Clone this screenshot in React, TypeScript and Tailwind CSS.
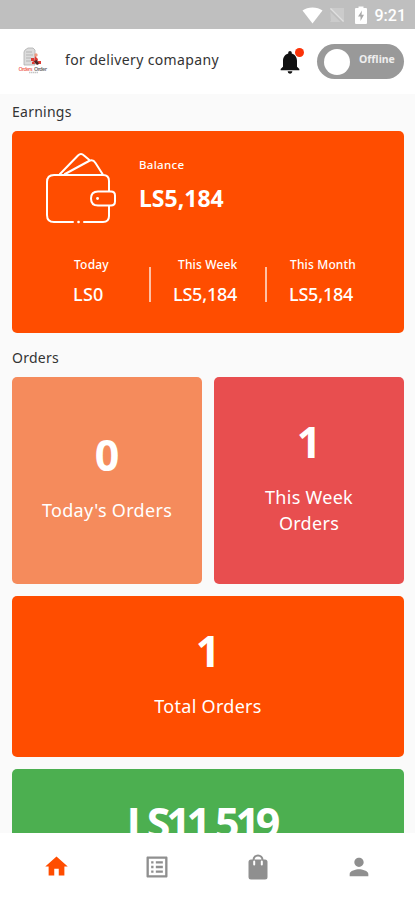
import { MdHome, MdListAlt, MdNotifications, MdPerson } from "react-icons/md";

const earnings = [
  { title: "Today", value: "LS0", titleClass: "left-[62px] tracking-[0.2px]", valueClass: "left-[61px] tracking-[0.3px]" },
  { title: "This Week", value: "LS5,184", titleClass: "left-[27px] tracking-[0.15px]", valueClass: "left-[22px] tracking-[-0.2px]" },
  { title: "This Month", value: "LS5,184", titleClass: "left-[23px] tracking-[0.15px]", valueClass: "left-[22px] tracking-[-0.2px]" },
];

function StatusBar() {
  return (
    <div className="flex h-[29px] shrink-0 items-center justify-end bg-[#bfbfbf] pr-[9px] text-white">
      <svg className="mt-[1px] h-[17px] w-[21px]" viewBox="0 0 21 17" fill="currentColor">
        <path d="M10.5 16.5 0.5 3.6C3.2 1.6 6.700.5 10.500.5s7.300 1.100 10 3.100z" />
      </svg>
      <svg className="mt-[1px] ml-[6px] h-[16px] w-[16px]" viewBox="0 0 16 16">
        <path d="M15 1v14H1z" fill="#d0d0d0" />
        <path d="M15 1v14H2L1 1z" fill="#cbcbcb" />
        <path d="M1 3l13 13" stroke="#bfbfbf" strokeWidth="2" />
        <path d="M1.500 1.500l13 13" stroke="#e0e0e0" strokeWidth="1.300" />
      </svg>
      <svg className="mt-[1px] ml-[10px] h-[18px] w-[12px]" viewBox="0 0 12 18">
        <path d="M3.500 2V.5h5V2H11q1 0 1 1v14q0 1-1 1H1q-1 0-1-1V3q0-1 1-1z" fill="#fff" />
        <path d="M7 4.500 3 10.500h2.500V15L9 8.800H6.500z" fill="#a9a9a9" />
      </svg>
      <span className="ml-[8px] mt-[3px] font-[Roboto] text-[16px] leading-none font-medium">9:21</span>
    </div>
  );
}

function Logo() {
  return (
    <svg className="h-[32px] w-[32px]" viewBox="0 0 32 32">
      <path d="M8 4l3-2h5l2 2v15H7V6z" fill="#dcdcdc" stroke="#adadad" strokeWidth=".8" />
      <path d="M9 6h6M9 9h7M9 12h5M9 15h5" stroke="#a5a5a5" strokeWidth=".7" />
      <circle cx="19" cy="9" r="1.700" fill="#ee9a80" />
      <path d="M14 12h3v3h-3zM18 10l3 3-1 3h-3zM21 15h3v3h-3zM15 16l2-1 1 3h-3z" fill="#dd3a33" />
      <path d="M17 15l3-1 2 4-2 1-2-2z" fill="#4b2525" />
      <text x="1.500" y="24.500" fontSize="5.300" fontWeight="600" fill="#f0685e" fontFamily="Noto Sans, sans-serif" textLength="14">Orders</text>
      <text x="17" y="24.500" fontSize="5.300" fontWeight="600" fill="#666" fontFamily="Noto Sans, sans-serif" textLength="13">Order</text>
      <path d="M12 26.500h9" stroke="#c5c5c5" strokeWidth="1.500" strokeDasharray="1.500 .5" />
    </svg>
  );
}

function Header() {
  return (
    <header className="flex h-[65px] shrink-0 items-center bg-white pl-[17px] pr-[11px]">
      <Logo />
      <h1 className="relative -top-[2px] ml-[16px] flex-1 whitespace-nowrap text-[14px] tracking-[0.36px] text-[#333]">
        for delivery comapany
      </h1>
      <div className="relative mr-[13px] h-[28px] w-[28px]">
        <MdNotifications className="h-[28px] w-[28px] text-[#111]" />
        <span className="absolute top-0 right-0 h-[9px] w-[9px] rounded-full bg-[#fb3208]" />
      </div>
      <button className="flex h-[35px] w-[87px] items-center rounded-full bg-[#999] pl-[7px] text-white">
        <span className="h-[26px] w-[26px] rounded-full bg-white" />
        <span className="relative -top-[2px] ml-[9px] text-[10.500px] font-bold text-[#eee]">Offline</span>
      </button>
    </header>
  );
}

function WalletIcon() {
  return (
    <svg className="h-[73px] w-[73px]" viewBox="0 0 73 73" fill="none" stroke="#fff" strokeWidth="2" strokeLinecap="round" strokeLinejoin="round">
      <path d="M28 70H9q-7 0-7-7V30q0-7 7-7h49q6 0 6 6v10M64 54v10q0 6-6 6H39" />
      <path d="M33.500 70h.1" strokeWidth="2.600" />
      <path d="M15 22 33 3.500q3-3 6 0l6 5M20 22 44 9q4-2 6.500 2l7 11" />
      <path d="M53 39.500h13q4 0 4 4v6q0 4-4 4H53q-7 0-7-7t7-7z" />
      <path d="M52.500 46.500h.1" strokeWidth="2.800" />
    </svg>
  );
}

function EarningsCard() {
  return (
    <section className="h-[202px] rounded-[5px] bg-[#ff4d00] text-white">
      <div className="flex h-[119px] pt-[21px] pl-[33px]">
        <WalletIcon />
        <div className="pt-[5px] pl-[21px]">
          <p className="text-[11.500px] leading-[16px] font-medium tracking-[0.3px]">Balance</p>
          <p className="mt-[10px] text-[23px] leading-[30px] font-bold">LS5,184</p>
        </div>
      </div>
      <div className="flex">
        {earnings.map((item, i) => (
          <div key={item.title} className={i === 0 ? "flex w-[139px]" : i === 1 ? "flex w-[116px]" : "flex flex-1"}>
            <div className="flex-1 whitespace-nowrap">
              <p className={`relative mt-[7px] text-[12px] leading-[16px] font-medium ${item.titleClass}`}>{item.title}</p>
              <p className={`relative mt-[9px] text-[18px] leading-[24px] font-medium ${item.valueClass}`}>{item.value}</p>
            </div>
            {i < 2 && <span className="mt-[17px] h-[35px] w-[2px] bg-[#ffc0a5]" />}
          </div>
        ))}
      </div>
    </section>
  );
}

function OrderCard({ count, label, className }: { count: string; label: string; className: string }) {
  return (
    <div className={`flex flex-col items-center justify-center rounded-[5px] pb-[9px] text-center text-white ${className}`}>
      <p className="text-[43px] leading-[50px] font-bold">{count}</p>
      <p className="mt-[17px] text-[18px] leading-[26px] font-[450] tracking-[0.3px]">{label}</p>
    </div>
  );
}

function BagIcon() {
  return (
    <svg className="mt-[21px] h-[26px] w-[20px] justify-self-center" viewBox="0 0 20 26">
      <path d="M5.500 8V6a4.500 4.500 0 0 1 9 0v2" fill="none" stroke="currentColor" strokeWidth="2" />
      <rect x=".5" y="5.500" width="19" height="20" rx="2.500" fill="currentColor" />
      <path d="M6.200 7.500v3M13.800 7.500v3" stroke="#fff" strokeWidth="2" strokeLinecap="round" />
    </svg>
  );
}

function BottomNav() {
  return (
    <nav className="grid h-[67px] shrink-0 grid-cols-4 bg-white px-[5px] text-[#8f8f8f]">
      <MdHome className="relative left-px mt-[20px] h-[27px] w-[27px] justify-self-center text-[#ff4d00]" />
      <MdListAlt className="mt-[20px] h-[28px] w-[28px] justify-self-center" />
      <BagIcon />
      <MdPerson className="mt-[20px] h-[28px] w-[28px] justify-self-center" />
    </nav>
  );
}

export default function App() {
  return (
    <div className="flex h-[900px] w-[415px] flex-col overflow-hidden bg-[#fafafa] font-['Noto_Sans',sans-serif]">
      <StatusBar />
      <Header />
      <main className="min-h-0 flex-1 overflow-hidden pr-[11px] pl-[12px]">
        <h2 className="h-[37px] pt-[8px] text-[14px] leading-[20px] tracking-[0.25px] text-[#333]">Earnings</h2>
        <EarningsCard />
        <h2 className="h-[44px] pt-[15px] text-[14px] leading-[20px] tracking-[0.25px] text-[#333]">Orders</h2>
        <div className="grid grid-cols-2 gap-3">
          <OrderCard count="0" label="Today's Orders" className="h-[207px] bg-[#f58b5c]" />
          <OrderCard count="1" label="This Week Orders" className="h-[207px] bg-[#e84e4f] px-[40px]" />
          <OrderCard count="1" label="Total Orders" className="col-span-2 h-[161px] bg-[#ff4d00]" />
          <div className="col-span-2 h-[161px] rounded-[5px] bg-[#4caf50] pt-[29px] pr-[13px] text-center text-white">
            <p className="text-[43px] leading-[50px] font-bold tracking-[-4.2px]">LS11,519</p>
          </div>
        </div>
      </main>
      <BottomNav />
    </div>
  );
}
